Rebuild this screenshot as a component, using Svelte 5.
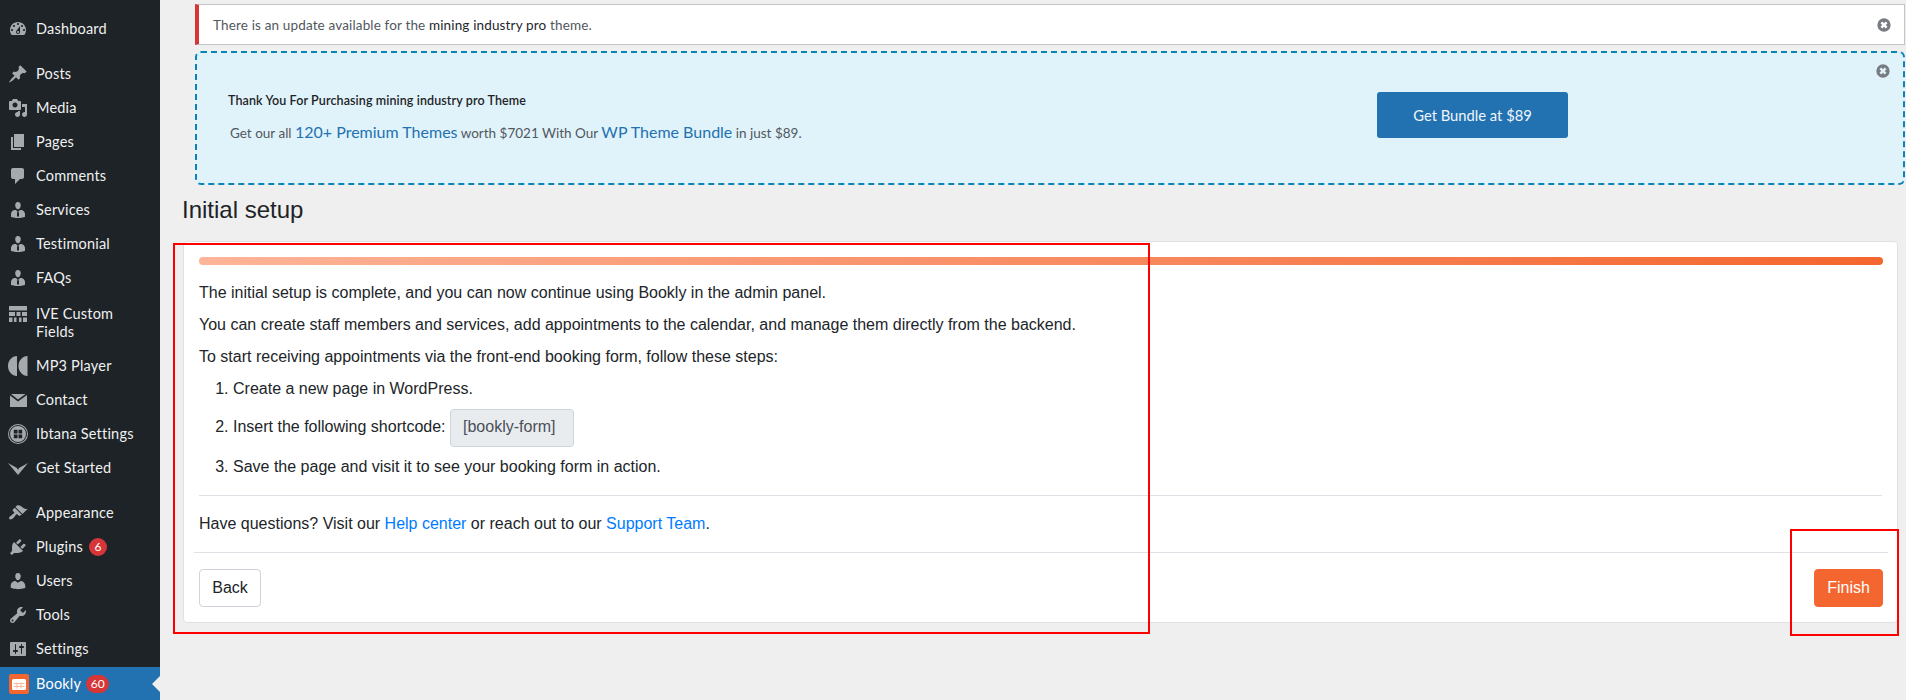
<script>
  const icons = {
    dashboard: "M3.76 16h12.48c1.1-1.37 1.76-3.11 1.76-5 0-4.42-3.58-8-8-8s-8 3.58-8 8c0 1.89.66 3.63 1.76 5zM10 4c.55 0 1 .45 1 1s-.45 1-1 1-1-.45-1-1 .45-1 1-1zM6 6c.55 0 1 .45 1 1s-.45 1-1 1-1-.45-1-1 .45-1 1-1zm8 0c.55 0 1 .45 1 1s-.45 1-1 1-1-.45-1-1 .45-1 1-1zm-5.37 5.55L12 7v6c0 1.1-.9 2-2 2s-2-.9-2-2c0-.57.24-1.08.63-1.45zM4 10c.55 0 1 .45 1 1s-.45 1-1 1-1-.45-1-1 .45-1 1-1zm12 0c.55 0 1 .45 1 1s-.45 1-1 1-1-.45-1-1 .45-1 1-1zm-5 3c0-.55-.45-1-1-1s-1 .45-1 1 .45 1 1 1 1-.45 1-1z",
    pin: "M10.44 3.02l1.82-1.82 6.36 6.35-1.83 1.82c-1.05-.68-2.48-.57-3.41.36l-.75.75c-.92.93-1.04 2.35-.35 3.41l-1.83 1.82-2.41-2.41-2.8 2.79c-.42.42-3.38 2.71-3.8 2.29s1.86-3.39 2.28-3.81l2.79-2.79L4.1 9.36l1.83-1.82c1.05.69 2.48.57 3.4-.36l.75-.75c.93-.92 1.05-2.35.36-3.41z",
    media: "M13 11V4c0-.55-.45-1-1-1h-1.67L9 1H5L3.67 3H2c-.55 0-1 .45-1 1v7c0 .55.45 1 1 1h10c.55 0 1-.45 1-1zM7 4.5c1.38 0 2.5 1.12 2.5 2.5S8.38 9.5 7 9.5 4.5 8.38 4.5 7 5.62 4.5 7 4.5zM14 6h5v10.5c0 1.38-1.12 2.5-2.5 2.5S14 17.88 14 16.5s1.12-2.5 2.5-2.5c.17 0 .34.02.5.05V9h-3V6zm-4 8.05V13h2v3.5c0 1.38-1.12 2.5-2.5 2.5S7 17.88 7 16.5 8.12 14 9.5 14c.17 0 .34.02.5.05z",
    pages: "M6 15V2h10v13H6zm-1 1h8v2H3V5h2v11z",
    comments: "M5 2h9c1.1 0 2 .9 2 2v7c0 1.1-.9 2-2 2h-2l-5 5v-5H5c-1.1 0-2-.9-2-2V4c0-1.1.9-2 2-2z",
    person: "M7.3 6l-.03-.19c-.04-.37-.05-.73-.03-1.08.02-.36.1-.71.25-1.04.14-.32.31-.61.52-.86s.49-.46.83-.6c.34-.15.72-.23 1.13-.23.69 0 1.26.2 1.71.59s.76.87.91 1.44.18 1.16.09 1.78l-.03.19c-.01.09-.05.25-.11.48-.05.24-.12.47-.2.69-.08.21-.19.45-.34.72-.14.27-.3.49-.47.69-.18.19-.4.34-.67.48-.27.13-.55.19-.86.19s-.59-.06-.87-.19c-.26-.13-.49-.29-.67-.5-.18-.2-.34-.42-.49-.66-.15-.25-.26-.49-.34-.73-.09-.25-.16-.47-.21-.67-.06-.21-.1-.37-.12-.5zm9.2 6.24c.41.7.5 1.41.5 2.14v2.49c0 .03-.12.08-.29.13-.18.04-.42.13-.97.27-.55.12-1.1.24-1.65.34s-1.19.19-1.95.27c-.75.08-1.46.12-2.13.12-.68 0-1.39-.04-2.14-.12-.75-.07-1.4-.17-1.98-.27-.58-.11-1.08-.23-1.56-.34-.49-.11-.8-.21-1.06-.29L3 16.87v-2.49c0-.75.07-1.46.46-2.15s.81-1.25 1.5-1.68C5.66 10.12 7.19 10 8 10l1.67 1.67L9 13v3l1.02 1.08L11 16v-3l-.68-1.33L11.97 10c.77 0 2.2.07 2.9.52.71.45 1.21 1.02 1.63 1.72z",
    grid: "M1 2h18v4.500H1zM1 8h6v4H1zM8.500 8h4v4h-4zM14 8h5v4h-5zM1 13.500h3.500V18H1zM6 13.500h2.500V18H6zM11 13.500h2.500V18H11zM15 13.500h4V18h-4z",
    mp3: "M9 0v20C4 20 0 15.500 0 10S4 0 9 0zM19.500 0v20c-5 0-9-4.500-9-10s4-10 9-10z",
    mail: "M3 4h14.500L10 9.500zM2 5.500l8 6 9-6.500v12H2z",
    ibtana: "M10 0a10 10 0 1 0 0 20 10 10 0 0 0 0-20zm0 1a9 9 0 1 1 0 18 9 9 0 0 1 0-18zM10 2a8 8 0 1 0 0 16 8 8 0 0 0 0-16zM5.800 5.800h3.700v3.700H5.800zM10.500 5.800h3.700v3.700h-3.700zM5.800 10.500h3.700v3.700H5.800zM10.500 10.500h3.700v3.700h-3.700z",
    started: "M0 5l9 5 1 2 1-2 9-5-10 12z",
    brush: "M14.48 11.06L7.41 3.99l1.5-1.5c.5-.56 2.3-.47 3.51.32 1.21.8 1.43 1.28 2.91 2.1 1.18.64 2.45 1.26 4.45.85zm-.71.71L6.7 4.7 4.93 6.47c-.39.39-.39 1.02 0 1.41l1.06 1.06c.39.39.39 1.03 0 1.42-.6.6-1.43 1.11-2.21 1.69-.35.26-.7.53-1.01.84C1.43 13.23.5 15.22 1.4 16.1c.89.89 2.85-.08 4.19-1.36.34-.33.6-.68.87-1.04.56-.76 1.09-1.59 1.67-2.17.39-.39 1.03-.39 1.42 0l1.06 1.06c.39.39 1.02.39 1.41 0z",
    plugin: "M13.11 4.36L9.87 7.6 8 5.73l3.24-3.24c.35-.34 1.05-.2 1.56.32.52.51.66 1.21.31 1.55zm-8 1.77l.91-1.12 9.01 9.01-1.19.84c-.71.71-2.63 1.16-3.82 1.16H6.14L4.9 17.26c-.59.59-1.54.59-2.12 0-.59-.58-.59-1.53 0-2.12l1.24-1.24v-3.88c0-1.13.4-3.19 1.09-3.89zm7.26 3.97l3.24-3.24c.34-.35 1.04-.21 1.55.31.52.51.66 1.21.31 1.55l-3.24 3.25z",
    users: "M10 9.25c-2.27 0-2.73-3.44-2.73-3.44C7 4.02 7.82 2 9.97 2c2.16 0 2.98 2.02 2.71 3.81 0 0-.41 3.44-2.68 3.44zm0 2.57L12.72 10c2.39 0 4.52 2.33 4.52 4.53v2.49s-3.65 1.13-7.24 1.13c-3.65 0-7.24-1.13-7.24-1.13v-2.49c0-2.25 1.94-4.48 4.47-4.48z",
    tools: "M16.68 9.77c-1.34 1.34-3.3 1.67-4.95.99l-5.41 6.52c-.99.99-2.59.99-3.58 0s-.99-2.59 0-3.57l6.52-5.42c-.68-1.65-.35-3.61.99-4.95 1.28-1.28 3.12-1.62 4.72-1.06l-2.89 2.89 2.82 2.82 2.86-2.87c.53 1.58.18 3.39-1.08 4.65zM3.81 16.21c.4.39 1.04.39 1.43 0 .4-.4.4-1.04 0-1.43-.39-.4-1.03-.4-1.43 0-.39.39-.39 1.03 0 1.43z",
    settings: "M18 16V4c0-.55-.45-1-1-1H3c-.55 0-1 .45-1 1v12c0 .55.45 1 1 1h14c.55 0 1-.45 1-1zM8 11h1c.55 0 1 .45 1 1s-.45 1-1 1H8v1.5c0 .28-.22.5-.5.5s-.5-.22-.5-.5V13H6c-.55 0-1-.45-1-1s.45-1 1-1h1V5.5c0-.28.22-.5.5-.5s.5.22.5.5V11zm5-2h-1c-.55 0-1-.45-1-1s.45-1 1-1h1V5.5c0-.28.22-.5.5-.5s.5.22.5.5V7h1c.55 0 1 .45 1 1s-.45 1-1 1h-1v5.5c0 .28-.22.5-.5.5s-.5-.22-.5-.5V9z"
  };

  const menu = [
    { label: "Dashboard", icon: "dashboard", gap: true },
    { label: "Posts", icon: "pin" },
    { label: "Media", icon: "media" },
    { label: "Pages", icon: "pages" },
    { label: "Comments", icon: "comments" },
    { label: "Services", icon: "person" },
    { label: "Testimonial", icon: "person" },
    { label: "FAQs", icon: "person" },
    { label: "IVE Custom Fields", icon: "grid", tall: true },
    { label: "MP3 Player", icon: "mp3" },
    { label: "Contact", icon: "mail" },
    { label: "Ibtana Settings", icon: "ibtana" },
    { label: "Get Started", icon: "started", gap: true },
    { label: "Appearance", icon: "brush" },
    { label: "Plugins", icon: "plugin", badge: 6 },
    { label: "Users", icon: "users" },
    { label: "Tools", icon: "tools" },
    { label: "Settings", icon: "settings" }
  ];

  const closePath = "M10 .5a9.500 9.500 0 1 0 0 19 9.500 9.500 0 0 0 0-19zm5 12-2.500 2.500L10 12.500 7.500 15 5 12.500 7.500 10 5 7.500 7.500 5 10 7.500 12.500 5 15 7.500 12.500 10z";
</script>

<div class="page">
  <nav class="sidebar">
    {#each menu as item}
      <div class="item" class:tall={item.tall} class:gap={item.gap}>
        <svg class="icon" viewBox="0 0 20 20"><path fill-rule="evenodd" d={icons[item.icon]} /></svg>
        <span class="label">{item.label}</span>
        {#if item.badge}<span class="badge">{item.badge}</span>{/if}
      </div>
    {/each}
    <div class="item current">
      <svg class="bookly" viewBox="0 0 20 20">
        <rect width="20" height="20" rx="2" fill="#f4662f" />
        <rect x="3" y="5" width="14" height="11" rx="1.500" fill="#fff" />
        <path d="M4.500 9.500h11M4.500 12.500h11M8 8.500v6M12 8.500v6" stroke="#f9b79c" stroke-width="1" fill="none" />
      </svg>
      <span class="label">Bookly</span>
      <span class="badge wide">60</span>
      <span class="arrow"></span>
    </div>
  </nav>

  <main class="content">
    <div class="notices">
      <div class="notice">
        <p>There is an update available for the <b>mining industry pro</b> theme.</p>
        <svg class="close" viewBox="0 0 20 20"><path fill-rule="evenodd" d={closePath} /></svg>
      </div>
      <div class="promo">
        <div class="promo-text">
          <h4>Thank You For Purchasing mining industry pro Theme</h4>
          <p>Get our all <a href="#top">120+ Premium Themes</a> worth $7021 With Our <a href="#top">WP Theme Bundle</a> in just $89.</p>
        </div>
        <span class="bundle">Get Bundle at $89</span>
        <svg class="close promo-close" viewBox="0 0 20 20"><path fill-rule="evenodd" d={closePath} /></svg>
      </div>
    </div>

    <h1>Initial setup</h1>

    <section class="card">
      <div class="card-body">
        <div class="progress"></div>
        <p>The initial setup is complete, and you can now continue using Bookly in the admin panel.</p>
        <p>You can create staff members and services, add appointments to the calendar, and manage them directly from the backend.</p>
        <p>To start receiving appointments via the front-end booking form, follow these steps:</p>
        <ol>
          <li>Create a new page in WordPress.</li>
          <li>Insert the following shortcode: <span class="code">[bookly-form]</span></li>
          <li>Save the page and visit it to see your booking form in action.</li>
        </ol>
        <hr />
        <p class="help">Have questions? Visit our <a href="#top">Help center</a> or reach out to our <a href="#top">Support Team</a>.</p>
      </div>
      <div class="card-footer">
        <button class="back">Back</button>
        <button class="finish">Finish</button>
      </div>
    </section>
  </main>

  <div class="mark mark-left"></div>
  <div class="mark mark-right"></div>
</div>

<style>
  :global(body) {
    margin: 0;
    background: #efefef;
  }

  .page {
    position: relative;
    display: flex;
    height: 700px;
    overflow: hidden;
    background: #efefef;
  }

  .sidebar {
    flex: 0 0 160px;
    padding-top: 12px;
    background: #1d2327;
    font-family: Lato, "Open Sans", sans-serif;
    font-size: 14.5px;
    letter-spacing: 0.2px;
    line-height: 18px;
    color: #f0f0f1;
  }

  .item {
    position: relative;
    display: flex;
    align-items: flex-start;
    height: 34px;
    box-sizing: border-box;
    padding: 8px 8px 8px 36px;
  }

  .item.tall {
    height: 54px;
    padding-top: 10px;
  }

  .item.gap {
    margin-bottom: 11px;
  }

  .icon {
    position: absolute;
    left: 8px;
    top: 7px;
    width: 20px;
    height: 20px;
    fill: #a7aaad;
  }

  .tall .icon {
    top: 9px;
  }

  .bookly {
    position: absolute;
    left: 9px;
    top: 7px;
    width: 20px;
    height: 20px;
  }

  .badge {
    margin: 0 0 0 6px;
    min-width: 18px;
    height: 18px;
    border-radius: 9px;
    background: #d63638;
    color: #fff;
    font-size: 12px;
    letter-spacing: 0;
    text-align: center;
  }

  .badge.wide {
    min-width: 23px;
    margin-left: 5px;
  }

  .current {
    margin-top: 1px;
    background: #2271b1;
    color: #fff;
  }

  .arrow {
    position: absolute;
    right: 0;
    top: 9px;
    border: 8px solid transparent;
    border-right-color: #efefef;
  }

  .content {
    flex: 1;
    min-width: 0;
    padding: 4px 1px 0 22px;
  }

  .notices {
    margin-left: 13px;
    font-family: Lato, "Open Sans", sans-serif;
  }

  .notice {
    display: flex;
    align-items: center;
    justify-content: space-between;
    box-sizing: border-box;
    height: 41px;
    padding: 0 13px 0 14px;
    background: #fff;
    border: 1px solid #c3c4c7;
    border-left: 4px solid #d63638;
    font-size: 13.5px;
    color: #50575e;
    letter-spacing: 0.15px;
  }

  .notice b {
    font-weight: 400;
    color: #23282d;
  }

  .notice p,
  .promo p,
  .promo h4 {
    margin: 0;
  }

  .close {
    width: 14px;
    height: 14px;
    fill: #787c82;
  }

  .promo {
    position: relative;
    display: flex;
    align-items: center;
    box-sizing: border-box;
    height: 134px;
    margin-top: 6px;
    padding: 0 0 6px 31px;
    background: #e1f3fa;
    border: 2px dashed #0a84b8;
    border-radius: 6px;
  }

  .promo-text {
    width: 1149px;
    margin-top: 4px;
  }

  .promo h4 {
    font-size: 12.5px;
    font-weight: 600;
    color: #1d2327;
    letter-spacing: 0.1px;
    margin-bottom: 14px;
  }

  .promo p {
    margin-left: 2px;
    font-size: 13.5px;
    color: #50575e;
  }

  .promo a {
    color: #2271b1;
    font-size: 16px;
    text-decoration: none;
  }

  .bundle {
    display: flex;
    align-items: center;
    justify-content: center;
    width: 191px;
    height: 46px;
    border-radius: 3px;
    background: #2271b1;
    color: #f0f6fc;
    font-size: 14.75px;
  }

  .promo-close {
    position: absolute;
    right: 13px;
    top: 11px;
  }

  h1 {
    margin: 11px 0 17px;
    font-family: "Liberation Sans", Arial, sans-serif;
    font-size: 24px;
    font-weight: 400;
    line-height: 28px;
    color: #1d2327;
  }

  .card {
    box-sizing: border-box;
    width: 1715px;
    height: 382px;
    margin-left: 1px;
    background: #fff;
    border: 1px solid #dee2e6;
    border-radius: 4px;
    font-family: "Liberation Sans", Arial, sans-serif;
    font-size: 16px;
    line-height: 24px;
    color: #212529;
  }

  .card-body {
    padding: 15px 15px 0;
  }

  .progress {
    height: 8px;
    margin: 0 -1px 16px 0;
    border-radius: 4px;
    background: linear-gradient(to right, #fdb498, #f4662f);
  }

  .card-body p {
    margin: 0 0 8px;
  }

  ol {
    margin: 0;
    padding-left: 34px;
  }

  li {
    margin-bottom: 8px;
  }

  .code {
    display: inline-block;
    box-sizing: border-box;
    width: 124px;
    height: 38px;
    padding: 5px 12px 7px;
    background: #e9ecef;
    border: 1px solid #ced4da;
    border-radius: 4px;
    color: #495057;
  }

  hr {
    margin: 16px 0;
    border: 0;
    border-top: 1px solid #dee2e6;
  }

  .card-body p.help {
    margin: 0;
  }

  a {
    color: #007bff;
    text-decoration: none;
  }

  .card-footer {
    display: flex;
    justify-content: space-between;
    margin: 16px 9px 0 10px;
    padding: 16px 5px 0;
    border-top: 1px solid #dee2e6;
  }

  button {
    height: 38px;
    padding: 0 12px;
    border-radius: 4px;
    font: inherit;
  }

  .back {
    width: 62px;
    background: #fff;
    border: 1px solid #ced4da;
    color: #212529;
  }

  .finish {
    width: 69px;
    background: #f4662f;
    border: 1px solid #f4662f;
    color: #fff;
  }

  .mark {
    position: absolute;
    box-sizing: border-box;
    border: 2px solid #f00;
  }

  .mark-left {
    left: 173px;
    top: 243px;
    width: 977px;
    height: 391px;
  }

  .mark-right {
    left: 1790px;
    top: 529px;
    width: 109px;
    height: 107px;
  }
</style>
